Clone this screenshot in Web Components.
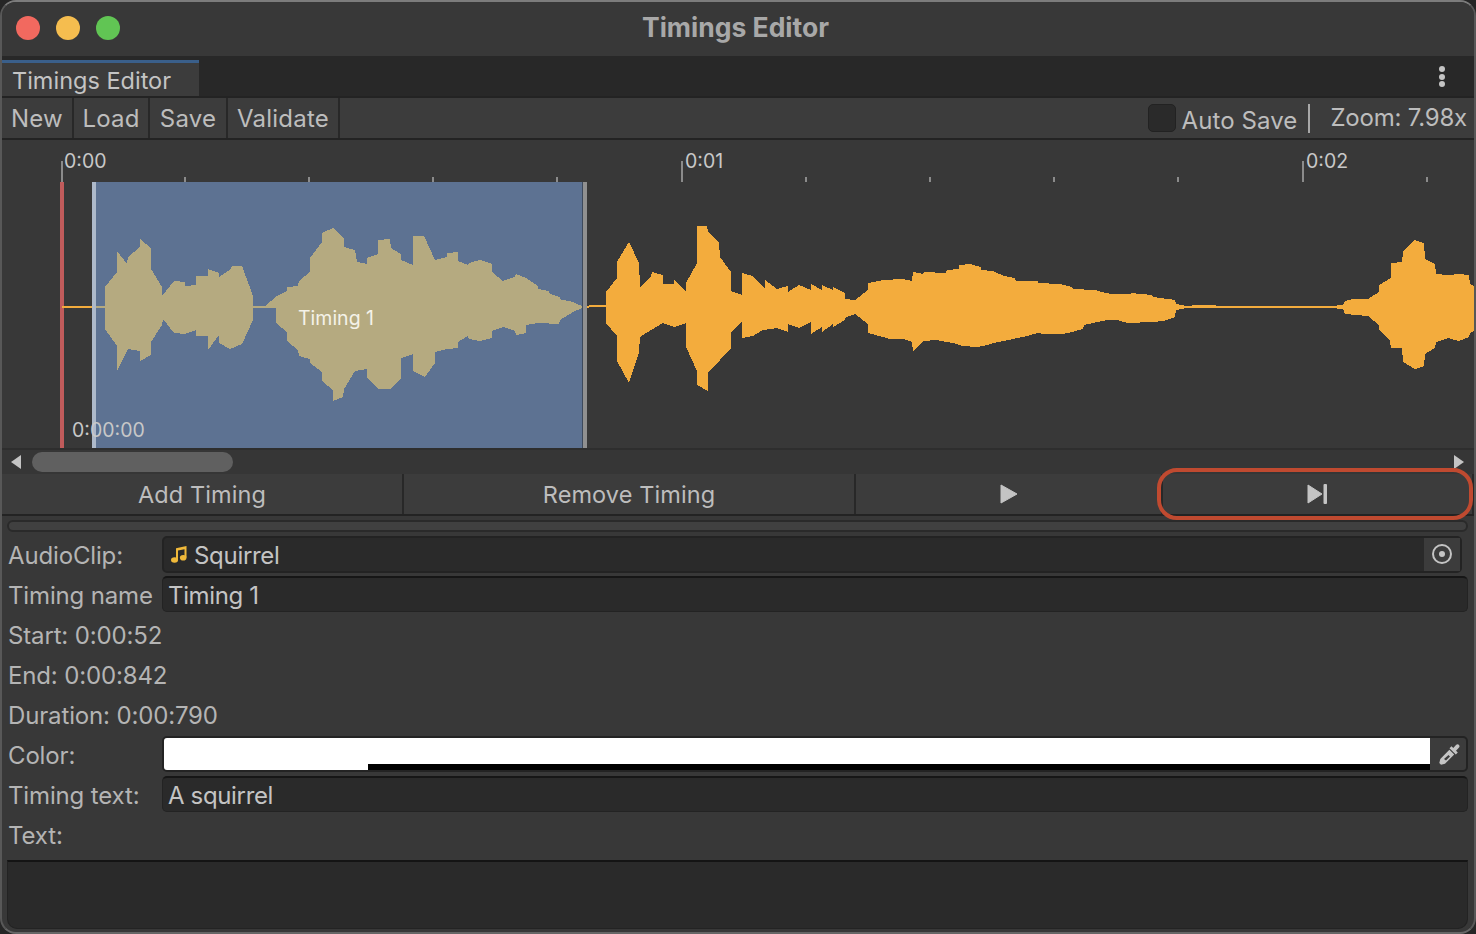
<!DOCTYPE html>
<html>
<head>
<meta charset="utf-8">
<title>Timings Editor</title>
<style>
    html, body { margin: 0; padding: 0; background: #262626; }
    body { width: 1476px; height: 934px; overflow: hidden; font-family: Inter, "Liberation Sans", sans-serif; }
</style>
</head>
<body>
<editor-window>
    <title-bar slot="title">Timings Editor</title-bar>
    <tab-strip>Timings Editor</tab-strip>
    <editor-toolbar></editor-toolbar>
    <wave-timeline></wave-timeline>
    <h-scrollbar></h-scrollbar>
    <action-row></action-row>
    <thin-progress></thin-progress>
    <field-row label="AudioClip:" inset>
        <object-field>Squirrel</object-field>
    </field-row>
    <field-row label="Timing name"><text-field>Timing 1</text-field></field-row>
    <field-row label="Start: 0:00:52"></field-row>
    <field-row label="End: 0:00:842"></field-row>
    <field-row label="Duration: 0:00:790"></field-row>
    <field-row label="Color:"><color-field></color-field></field-row>
    <field-row label="Timing text:"><text-field>A squirrel</text-field></field-row>
    <field-row label="Text:"></field-row>
    <text-area></text-area>
</editor-window>

<script>
const TEXT_FONT = `font-family: Inter, "Liberation Sans", sans-serif;`;

class EditorWindow extends HTMLElement {
    connectedCallback() {
        this.attachShadow({ mode: 'open' });
        this.shadowRoot.innerHTML = `
            <style>
                :host {
                    display: flex;
                    flex-direction: column;
                    box-sizing: border-box;
                    width: 1476px;
                    height: 934px;
                    background: #383838;
                    border: 2px solid #585858;
                    border-top-color: #7c7c7c;
                    border-bottom-color: #666;
                    border-radius: 16px;
                    overflow: hidden;
                    position: relative;
                    color: #bdbdbd;
                }
            </style>
            <slot name="title"></slot>
            <slot></slot>
        `;
    }
}

class TitleBar extends HTMLElement {
    connectedCallback() {
        this.attachShadow({ mode: 'open' });
        this.shadowRoot.innerHTML = `
            <style>
                :host {
                    display: flex;
                    align-items: center;
                    justify-content: center;
                    height: 54px;
                    flex: none;
                    background: #383838;
                    position: relative;
                }
                .title {
                    ${TEXT_FONT}
                    font-weight: 700;
                    font-size: 26.500px;
                    color: #a8a8a8;
                    margin-top: -4px;
                    margin-right: 5px;
                }
                .lights {
                    position: absolute;
                    left: 14px;
                    top: 14px;
                    display: flex;
                    gap: 16px;
                }
                .lights i { display: block; width: 24px; height: 24px; border-radius: 50%; }
                .red { background: #f2695f; }
                .yellow { background: #f5bd4f; }
                .green { background: #61c554; }
            </style>
            <div class="lights"><i class="red"></i><i class="yellow"></i><i class="green"></i></div>
            <span class="title"><slot></slot></span>
        `;
    }
}

class TabStrip extends HTMLElement {
    connectedCallback() {
        this.attachShadow({ mode: 'open' });
        this.shadowRoot.innerHTML = `
            <style>
                :host {
                    display: flex;
                    justify-content: space-between;
                    height: 42px;
                    flex: none;
                    box-sizing: border-box;
                    padding-top: 4px;
                    background: #282828;
                    border-bottom: 2px solid #232323;
                }
                .tab {
                    ${TEXT_FONT}
                    box-sizing: border-box;
                    width: 197px;
                    height: 36px;
                    padding: 0 0 0 10px;
                    background: #3c3c3c;
                    border-top: 3px solid #3a5f8a;
                    font-size: 23.500px;
                    line-height: 35px;
                    color: #c4c4c4;
                }
                .more { display: flex; flex-direction: column; gap: 1.500px; margin: 6px 29px 0 0; }
                .more i { display: block; width: 6px; height: 6px; border-radius: 50%; background: #c4c4c4; }
            </style>
            <div class="tab"><slot></slot></div>
            <div class="more"><i></i><i></i><i></i></div>
        `;
    }
}

class EditorToolbar extends HTMLElement {
    connectedCallback() {
        this.attachShadow({ mode: 'open' });
        this.shadowRoot.innerHTML = `
            <style>
                :host {
                    ${TEXT_FONT}
                    display: flex;
                    align-items: stretch;
                    height: 42px;
                    flex: none;
                    box-sizing: border-box;
                    background: #3c3c3c;
                    border-bottom: 2px solid #232323;
                    font-size: 24px;
                    letter-spacing: 0.200px;
                    color: #bdbdbd;
                }
                .btn {
                    box-sizing: border-box;
                    display: flex;
                    align-items: center;
                    justify-content: center;
                    border-right: 2px solid #282828;
                }
                .right { margin-left: auto; display: flex; align-items: center; }
                .check {
                    box-sizing: border-box;
                    width: 28px;
                    height: 28px;
                    background: #2a2a2a;
                    border: 1px solid #222;
                    border-radius: 5px;
                    margin-right: 6px;
                }
                .auto { letter-spacing: 0.100px; position: relative; top: 2px; }
                .sep { width: 2px; height: 29px; background: #a8a8a8; margin: 0 20px 0 11px; }
                .zoom { margin-right: 7px; letter-spacing: -0.200px; position: relative; top: -1px; }
            </style>
            <div class="btn" style="width:72px">New</div>
            <div class="btn" style="width:76px">Load</div>
            <div class="btn" style="width:78px">Save</div>
            <div class="btn" style="width:112px">Validate</div>
            <div class="right">
                <div class="check"></div>
                <span class="auto">Auto Save</span>
                <div class="sep"></div>
                <span class="zoom">Zoom: 7.98x</span>
            </div>
        `;
    }
}

const WAVE_POINTS = [
    [62,306],[105,306],[105,287],[117,272],[117,251],[127,264],[128,257],[140,247],[140,239],[151,248],[151,269],[162,287],[162,296],[174,281],[185,282],[185,286],[196,285],[196,276],[208,276],[208,269],[219,273],[219,277],[231,269],[232,266],[242,266],[253,296],[253,306],[265,306],[277,296],[287,291],[287,287],[298,286],[299,281],[310,272],[310,258],[322,242],[322,233],[333,228],[344,239],[344,247],[355,250],[357,262],[367,264],[367,258],[378,254],[378,240],[390,239],[391,248],[401,254],[401,260],[413,265],[413,236],[424,236],[435,260],[447,257],[447,253],[458,252],[458,261],[468,265],[469,263],[480,260],[492,264],[492,272],[503,281],[515,277],[516,274],[526,278],[538,286],[538,289],[549,291],[550,294],[560,297],[561,300],[570,301],[582,306],[595,305],[606,305],
    [606,292],[617,278],[617,262],[629,242],[639,263],[640,287],[651,276],[652,272],[663,275],[663,284],[674,284],[674,280],[686,292],[686,283],[697,263],[697,226],[707,226],[708,232],[719,243],[720,257],[731,272],[731,291],[742,295],[742,273],[753,276],[765,289],[765,280],[777,289],[788,286],[788,292],[799,285],[811,290],[811,284],[822,290],[822,285],[833,290],[833,287],[845,293],[845,299],[855,300],[868,290],[868,283],[883,280],[902,279],[912,281],[913,272],[923,274],[924,272],[946,273],[947,270],[959,269],[959,265],[970,264],[981,267],[981,270],[993,271],[1004,276],[1015,278],[1016,281],[1038,281],[1038,283],[1060,284],[1072,287],[1073,289],[1095,290],[1106,293],[1112,294],[1130,294],[1131,293],[1152,295],[1153,297],[1168,299],[1175,300],[1176,304],[1186,306],[1197,305],[1208,305],[1223,306],[1299,306],[1330,306],[1343,305],[1345,301],[1353,299],[1368,299],[1379,292],[1379,285],[1391,278],[1391,263],[1402,262],[1403,252],[1414,240],[1424,243],[1425,259],[1435,264],[1436,274],[1448,275],[1459,274],[1469,275],[1470,284],[1474,286],
    [1474,331],[1470,333],[1469,337],[1459,341],[1448,338],[1436,342],[1435,348],[1425,354],[1424,366],[1415,369],[1403,362],[1402,348],[1391,348],[1390,341],[1379,330],[1379,325],[1368,316],[1345,314],[1343,309],[1330,308],[1299,308],[1223,308],[1186,308],[1176,310],[1175,317],[1163,321],[1152,322],[1128,323],[1117,320],[1107,320],[1084,325],[1083,329],[1072,332],[1063,334],[1043,334],[1038,333],[1027,336],[1013,339],[993,343],[988,345],[977,347],[963,346],[953,343],[936,340],[923,341],[913,351],[912,342],[903,339],[890,339],[883,337],[868,333],[868,324],[855,314],[846,317],[845,320],[833,327],[833,324],[822,332],[822,327],[811,334],[811,322],[799,328],[788,324],[788,332],[777,328],[763,330],[753,336],[742,338],[742,322],[731,332],[731,348],[720,360],[708,372],[708,391],[697,385],[697,371],[686,347],[686,323],[674,327],[663,323],[651,330],[640,337],[639,352],[629,383],[617,361],[617,336],[606,323],[606,307],[595,307],
    [582,308],[573,312],[560,320],[559,324],[538,323],[526,325],[526,333],[516,335],[515,331],[503,327],[492,331],[492,338],[480,341],[469,339],[468,336],[458,342],[458,348],[447,349],[435,352],[435,363],[425,377],[413,371],[413,354],[401,358],[401,379],[390,389],[378,389],[367,378],[367,369],[355,371],[344,389],[343,397],[333,401],[333,390],[322,381],[322,372],[310,363],[310,359],[299,356],[298,350],[287,341],[287,332],[276,323],[276,308],[253,308],[253,320],[242,344],[230,349],[219,343],[219,335],[208,350],[208,336],[196,336],[196,330],[185,334],[174,333],[163,319],[162,325],[151,342],[151,355],[140,361],[140,351],[128,349],[117,371],[117,346],[105,329],[105,308],[62,308]
];

class WaveTimeline extends HTMLElement {
    connectedCallback() {
        this.attachShadow({ mode: 'open' });
        const points = WAVE_POINTS.map(p => p.join(',')).join(' ');
        const major = [61, 681, 1302].map(x => `<rect x="${x}" y="161" width="2" height="21" fill="#8b8b8b"/>`).join('');
        const minor = [185, 309, 433, 557, 806, 930, 1054, 1178, 1427].map(x => `<rect x="${x - 1}" y="177" width="2" height="5" fill="#8b8b8b"/>`).join('');
        this.shadowRoot.innerHTML = `
            <style>
                :host {
                    ${TEXT_FONT}
                    display: block;
                    position: relative;
                    height: 308px;
                    flex: none;
                    background: #383838;
                    margin-left: -2px;
                    margin-right: -2px;
                    font-size: 19.500px;
                    color: #c8c8c8;
                }
                svg { display: block; position: absolute; left: 0; top: 0; }
                span { position: absolute; line-height: 24px; }
            </style>
            <svg width="1476" height="308" viewBox="0 140 1476 308" shape-rendering="crispEdges">
                <defs>
                    <clipPath id="sel"><rect x="92" y="182" width="494" height="266"/></clipPath>
                </defs>
                ${major}${minor}
                <rect x="60" y="182" width="4" height="266" fill="#c05b5b"/>
                <polygon points="${points}" fill="#f3ac3d"/>
                <rect x="92" y="182" width="494" height="266" fill="#5d7292"/>
                <polygon points="${points}" fill="#b5aa80" clip-path="url(#sel)"/>
                <rect x="92" y="182" width="4" height="266" fill="#adb9ca"/>
                <rect x="582" y="182" width="2" height="266" fill="#3e4a5c"/>
                <rect x="583" y="182" width="4" height="266" fill="#909090"/>
            </svg>
            <span style="left:64px;top:9px">0:00</span>
            <span style="left:685px;top:9px">0:01</span>
            <span style="left:1306px;top:9px">0:02</span>
            <span style="left:298px;top:166px;color:#f4f2e8">Timing 1</span>
            <span style="left:72px;top:278px">0:00:00</span>
        `;
    }
}

class HScrollbar extends HTMLElement {
    connectedCallback() {
        this.attachShadow({ mode: 'open' });
        this.shadowRoot.innerHTML = `
            <style>
                :host {
                    display: flex;
                    align-items: center;
                    justify-content: space-between;
                    box-sizing: border-box;
                    height: 26px;
                    flex: none;
                    padding: 0 10px 0 9px;
                    background: #363636;
                    border-top: 2px solid #2e2e2e;
                }
                .thumb { width: 201px; height: 20px; border-radius: 10px; background: #606060; margin: 0 auto 0 11px; }
                svg { display: block; }
            </style>
            <svg width="10" height="14" viewBox="0 0 10 14"><path d="M10 0v14L0 7z" fill="#c4c4c4"/></svg>
            <div class="thumb"></div>
            <svg width="10" height="14" viewBox="0 0 10 14"><path d="M0 0v14l10-7z" fill="#c4c4c4"/></svg>
        `;
    }
}

class ActionRow extends HTMLElement {
    connectedCallback() {
        this.attachShadow({ mode: 'open' });
        this.shadowRoot.innerHTML = `
            <style>
                :host {
                    ${TEXT_FONT}
                    display: flex;
                    position: relative;
                    box-sizing: border-box;
                    height: 42px;
                    flex: none;
                    background: #3c3c3c;
                    border-bottom: 2px solid #232323;
                    font-size: 23.500px;
                    letter-spacing: 0.100px;
                    color: #bdbdbd;
                }
                .btn {
                    box-sizing: border-box;
                    display: flex;
                    align-items: center;
                    justify-content: center;
                    border-right: 2px solid #282828;
                }
                .btn:last-of-type { border-right: none; }
                svg { display: block; }
                .mark {
                    position: absolute;
                    left: 1155px;
                    top: -6px;
                    width: 316px;
                    height: 52px;
                    box-sizing: border-box;
                    border: 4.500px solid #c04a30;
                    border-radius: 20px;
                }
            </style>
            <div class="btn" style="width:402px">Add Timing</div>
            <div class="btn" style="width:452px">Remove Timing</div>
            <div class="btn" style="width:307px">
                <svg width="18" height="20" viewBox="0 0 18 20"><path d="M1 1v18l16-9z" fill="#c4c4c4" stroke="#c4c4c4" stroke-width="1" stroke-linejoin="round"/></svg>
            </div>
            <div class="btn" style="width:311px">
                <svg width="21" height="20" viewBox="0 0 21 20"><path d="M1 1v18l14-9z" fill="#c4c4c4" stroke="#c4c4c4" stroke-width="1" stroke-linejoin="round"/><rect x="16.500" y="0" width="3.500" height="20" rx="1" fill="#c4c4c4"/></svg>
            </div>
            <div class="mark"></div>
        `;
    }
}

class ThinProgress extends HTMLElement {
    connectedCallback() {
        this.attachShadow({ mode: 'open' });
        this.shadowRoot.innerHTML = `
            <style>
                :host {
                    display: block;
                    box-sizing: border-box;
                    height: 12px;
                    flex: none;
                    margin: 4px 6px 2px 5px;
                    background: #404040;
                    border: 2px solid #2a2a2a;
                    border-radius: 6px;
                }
            </style>
        `;
    }
}

class FieldRow extends HTMLElement {
    connectedCallback() {
        this.attachShadow({ mode: 'open' });
        const label = this.getAttribute('label');
        const endGap = this.hasAttribute('inset') ? 12 : 6;
        this.shadowRoot.innerHTML = `
            <style>
                :host {
                    ${TEXT_FONT}
                    display: grid;
                    grid-template-columns: 154px 1fr;
                    align-items: center;
                    height: 40px;
                    flex: none;
                    padding: 0 ${endGap}px 0 6px;
                    font-size: 24px;
                    letter-spacing: -0.150px;
                    color: #b4b4b4;
                }
                .label { white-space: nowrap; position: relative; top: 1px; }
            </style>
            <div class="label">${label}</div>
            <slot></slot>
        `;
    }
}

class TextField extends HTMLElement {
    connectedCallback() {
        this.attachShadow({ mode: 'open' });
        this.shadowRoot.innerHTML = `
            <style>
                :host {
                    display: block;
                    box-sizing: border-box;
                    height: 36px;
                    padding: 0 5px;
                    background: #2a2a2a;
                    border: 1px solid #232323;
                    border-top: 2px solid #161616;
                    border-radius: 5px;
                    font-size: 24px;
                    line-height: 36px;
                    letter-spacing: -0.350px;
                    color: #c4c4c4;
                }
            </style>
            <slot></slot>
        `;
    }
}

class ObjectField extends HTMLElement {
    connectedCallback() {
        this.attachShadow({ mode: 'open' });
        this.shadowRoot.innerHTML = `
            <style>
                :host {
                    display: flex;
                    align-items: center;
                    box-sizing: border-box;
                    height: 37px;
                    padding-left: 7px;
                    background: #2a2a2a;
                    border: 2px solid #232323;
                    border-radius: 5px;
                    font-size: 24px;
                    letter-spacing: -0.300px;
                    color: #c4c4c4;
                }
                .note { display: block; margin-right: 7px; }
                .name { position: relative; top: 1px; }
                .pick {
                    margin-left: auto;
                    width: 36px;
                    height: 33px;
                    background: #3c3c3c;
                    display: flex;
                    align-items: center;
                    justify-content: center;
                }
                svg { display: block; }
            </style>
            <svg class="note" width="16" height="18" viewBox="0 0 16 18">
                <path d="M5 3.200 15.500 1v11.500h-2V4.200L7 5.500v10h-2z" fill="#f0b93a"/>
                <ellipse cx="3.500" cy="15" rx="3.500" ry="2.800" fill="#f0b93a"/>
                <ellipse cx="12.200" cy="12.800" rx="3.300" ry="2.800" fill="#f0b93a"/>
            </svg>
            <span class="name"><slot></slot></span>
            <div class="pick">
                <svg width="20" height="20" viewBox="0 0 20 20">
                    <circle cx="10" cy="10" r="9" fill="none" stroke="#c4c4c4" stroke-width="2"/>
                    <circle cx="10" cy="10" r="3" fill="#c4c4c4"/>
                </svg>
            </div>
        `;
    }
}

class ColorField extends HTMLElement {
    connectedCallback() {
        this.attachShadow({ mode: 'open' });
        this.shadowRoot.innerHTML = `
            <style>
                :host {
                    display: flex;
                    box-sizing: border-box;
                    height: 36px;
                    background: #3c3c3c;
                    border: 2px solid #232323;
                    border-radius: 5px;
                    overflow: hidden;
                }
                .swatch { width: 1266px; background: #fff; position: relative; }
                .alpha { position: absolute; left: 204px; right: 0; bottom: 0; height: 6px; background: #000; }
                .pick { flex: 1; display: flex; align-items: center; justify-content: center; }
                svg { display: block; margin-left: 3px; }
            </style>
            <div class="swatch"><div class="alpha"></div></div>
            <div class="pick">
                <svg width="22" height="22" viewBox="0 0 22 22">
                    <path fill-rule="evenodd" fill="#c4c4c4" d="M12.500 3.200 14.300 5 17 2.100c1-1 2.200-1.100 3-.2.800.9.700 2-.2 2.800L17 7.700 18.800 9.500 16.800 11.500 10.500 5.200zM10.400 6.800 15.200 11.600 6 20.800 2 21.800 0.300 20 1.300 16zM9.500 12 11 13.500 7 17.500 5 16z"/>
                </svg>
            </div>
        `;
    }
}

class TextArea extends HTMLElement {
    connectedCallback() {
        this.attachShadow({ mode: 'open' });
        this.shadowRoot.innerHTML = `
            <style>
                :host {
                    display: block;
                    box-sizing: border-box;
                    flex: 1;
                    margin: 6px 6px 3px 5px;
                    background: #2a2a2a;
                    border: 1px solid #232323;
                    border-top: 2px solid #141414;
                    border-radius: 0 0 10px 10px;
                }
            </style>
        `;
    }
}

customElements.define('editor-window', EditorWindow);
customElements.define('title-bar', TitleBar);
customElements.define('tab-strip', TabStrip);
customElements.define('editor-toolbar', EditorToolbar);
customElements.define('wave-timeline', WaveTimeline);
customElements.define('h-scrollbar', HScrollbar);
customElements.define('action-row', ActionRow);
customElements.define('thin-progress', ThinProgress);
customElements.define('field-row', FieldRow);
customElements.define('text-field', TextField);
customElements.define('object-field', ObjectField);
customElements.define('color-field', ColorField);
customElements.define('text-area', TextArea);
</script>
</body>
</html>
